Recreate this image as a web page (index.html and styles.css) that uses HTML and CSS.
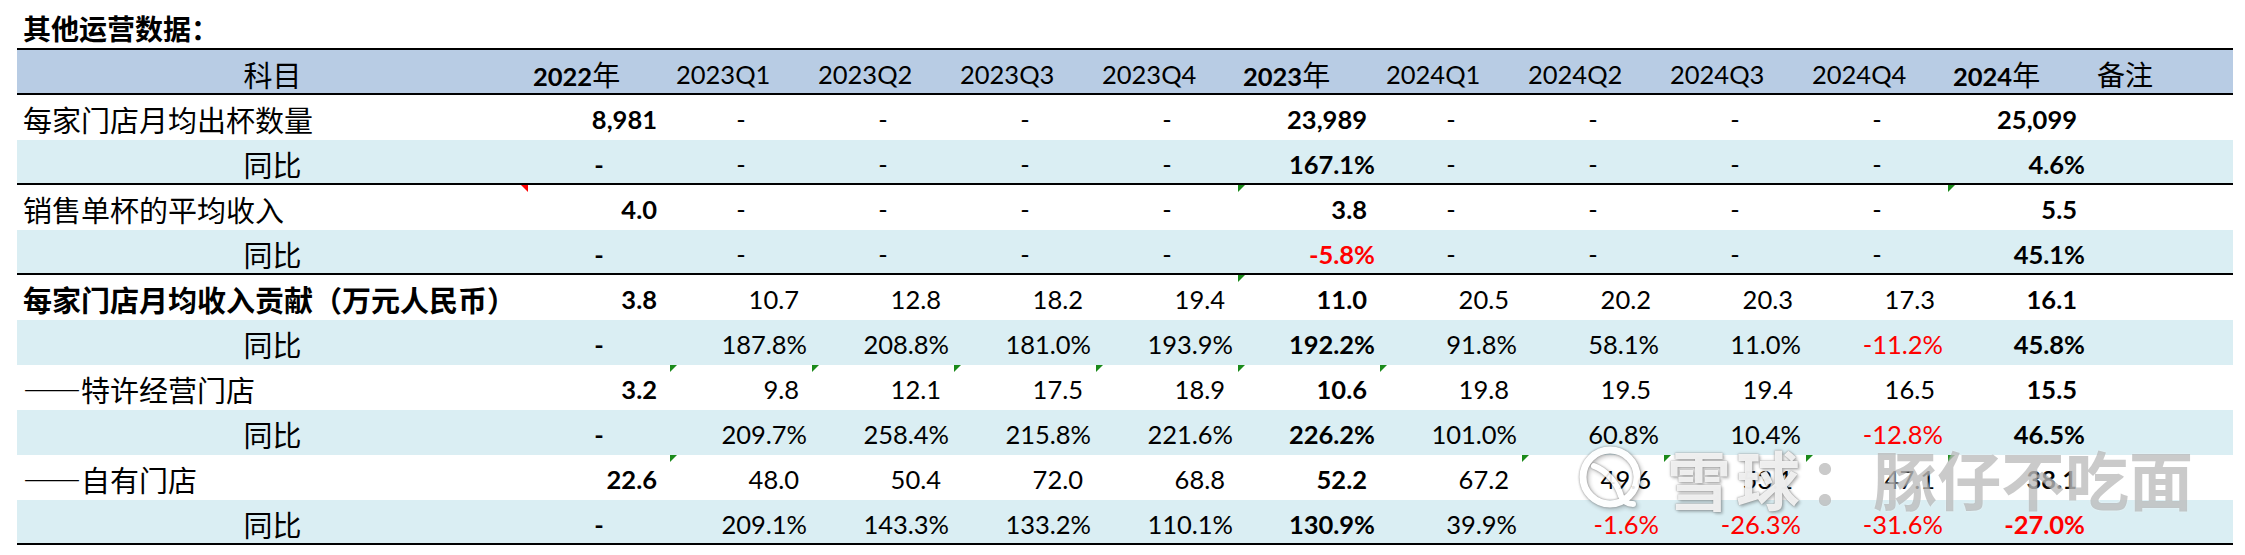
FILE: index.html
```html
<!DOCTYPE html>
<html lang="zh-CN">
<head>
<meta charset="utf-8">
<title>其他运营数据</title>
<link rel="stylesheet" href="styles.css">
</head>
<body>
<div class="title">其他运营数据：</div>
<div class="sheet">
  <div class="row hd">
    <div class="c lab ctr">科目</div>
    <div class="c hy"><span class="yb">2022</span>年</div>
    <div class="c h">2023Q1</div>
    <div class="c h">2023Q2</div>
    <div class="c h">2023Q3</div>
    <div class="c h">2023Q4</div>
    <div class="c hy"><span class="yb">2023</span>年</div>
    <div class="c h">2024Q1</div>
    <div class="c h">2024Q2</div>
    <div class="c h">2024Q3</div>
    <div class="c h">2024Q4</div>
    <div class="c hy"><span class="yb">2024</span>年</div>
    <div class="c hy rem">备注</div>
  </div>

  <div class="row">
    <div class="c lab">每家门店月均出杯数量</div>
    <div class="c n b">8,981</div>
    <div class="c d">-</div><div class="c d">-</div><div class="c d">-</div><div class="c d">-</div>
    <div class="c n b">23,989</div>
    <div class="c d">-</div><div class="c d">-</div><div class="c d">-</div><div class="c d">-</div>
    <div class="c n b">25,099</div>
    <div class="c"></div>
  </div>

  <div class="row yoy sep">
    <div class="c lab ctr">同比</div>
    <div class="c d b">-</div>
    <div class="c d">-</div><div class="c d">-</div><div class="c d">-</div><div class="c d">-</div>
    <div class="c p b">167.1%</div>
    <div class="c d">-</div><div class="c d">-</div><div class="c d">-</div><div class="c d">-</div>
    <div class="c p b">4.6%</div>
    <div class="c"></div>
  </div>

  <div class="row">
    <div class="c lab rc">销售单杯的平均收入</div>
    <div class="c n b">4.0</div>
    <div class="c d">-</div><div class="c d">-</div><div class="c d">-</div><div class="c d">-</div>
    <div class="c n b g">3.8</div>
    <div class="c d">-</div><div class="c d">-</div><div class="c d">-</div><div class="c d">-</div>
    <div class="c n b g">5.5</div>
    <div class="c"></div>
  </div>

  <div class="row yoy sep">
    <div class="c lab ctr">同比</div>
    <div class="c d b">-</div>
    <div class="c d">-</div><div class="c d">-</div><div class="c d">-</div><div class="c d">-</div>
    <div class="c p b r">-5.8%</div>
    <div class="c d">-</div><div class="c d">-</div><div class="c d">-</div><div class="c d">-</div>
    <div class="c p b">45.1%</div>
    <div class="c"></div>
  </div>

  <div class="row">
    <div class="c lab b">每家门店月均收入贡献（万元人民币）</div>
    <div class="c n b">3.8</div>
    <div class="c n">10.7</div><div class="c n">12.8</div><div class="c n">18.2</div><div class="c n">19.4</div>
    <div class="c n b g">11.0</div>
    <div class="c n">20.5</div><div class="c n">20.2</div><div class="c n">20.3</div><div class="c n">17.3</div>
    <div class="c n b">16.1</div>
    <div class="c"></div>
  </div>

  <div class="row yoy">
    <div class="c lab ctr">同比</div>
    <div class="c d b">-</div>
    <div class="c p">187.8%</div><div class="c p">208.8%</div><div class="c p">181.0%</div><div class="c p">193.9%</div>
    <div class="c p b">192.2%</div>
    <div class="c p">91.8%</div><div class="c p">58.1%</div><div class="c p">11.0%</div><div class="c p r">-11.2%</div>
    <div class="c p b">45.8%</div>
    <div class="c"></div>
  </div>

  <div class="row">
    <div class="c lab">——特许经营门店</div>
    <div class="c n b">3.2</div>
    <div class="c n g">9.8</div><div class="c n g">12.1</div><div class="c n g">17.5</div><div class="c n g">18.9</div>
    <div class="c n b g">10.6</div>
    <div class="c n g">19.8</div><div class="c n">19.5</div><div class="c n">19.4</div><div class="c n">16.5</div>
    <div class="c n b">15.5</div>
    <div class="c"></div>
  </div>

  <div class="row yoy">
    <div class="c lab ctr">同比</div>
    <div class="c d b">-</div>
    <div class="c p">209.7%</div><div class="c p">258.4%</div><div class="c p">215.8%</div><div class="c p">221.6%</div>
    <div class="c p b">226.2%</div>
    <div class="c p">101.0%</div><div class="c p">60.8%</div><div class="c p">10.4%</div><div class="c p r">-12.8%</div>
    <div class="c p b">46.5%</div>
    <div class="c"></div>
  </div>

  <div class="row">
    <div class="c lab">——自有门店</div>
    <div class="c n b">22.6</div>
    <div class="c n g">48.0</div><div class="c n">50.4</div><div class="c n">72.0</div><div class="c n">68.8</div>
    <div class="c n b">52.2</div>
    <div class="c n">67.2</div><div class="c n g">49.6</div><div class="c n g">53.1</div><div class="c n g">47.1</div>
    <div class="c n b g">38.1</div>
    <div class="c"></div>
  </div>

  <div class="row yoy sep">
    <div class="c lab ctr">同比</div>
    <div class="c d b">-</div>
    <div class="c p">209.1%</div><div class="c p">143.3%</div><div class="c p">133.2%</div><div class="c p">110.1%</div>
    <div class="c p b">130.9%</div>
    <div class="c p">39.9%</div><div class="c p r">-1.6%</div><div class="c p r">-26.3%</div><div class="c p r">-31.6%</div>
    <div class="c p b r">-27.0%</div>
    <div class="c"></div>
  </div>
</div>

<div class="wm">
  <svg class="wm-logo" width="66" height="66" viewBox="0 0 66 66">
    <circle cx="33" cy="33" r="27" fill="none" stroke="#fff" stroke-width="7"/>
    <path d="M17 22 C 28 26, 40 38, 44 52 C 46 57, 50 60, 56 60" fill="none" stroke="#fff" stroke-width="6" stroke-linecap="round"/>
  </svg>
  <span class="wm-a">雪球</span><span class="wm-b">：</span><span class="wm-c">豚仔不吃面</span>
</div>
</body>
</html>
```

FILE: styles.css
```css
html, body {
  margin: 0;
  padding: 0;
  background: #fff;
}

body {
  position: relative;
  width: 2245px;
  height: 555px;
  overflow: hidden;
  color: #000;
}

.title {
  box-sizing: border-box;
  height: 48px;
  padding: 7px 0 0 23px;
  font-family: "Noto Sans CJK SC", sans-serif;
  font-weight: 700;
  font-size: 28px;
  line-height: 42px;
}

.sheet {
  margin-left: 17px;
  width: 2216px;
  border-top: 2px solid #000;
}

.row {
  display: grid;
  grid-template-columns: 511px repeat(11, 142px) 143px;
  box-sizing: border-box;
  height: 45px;
}

.hd {
  background: #b8cce4;
  border-bottom: 2px solid #000;
}

.yoy {
  background: #daeef3;
}

.sep {
  border-bottom: 2px solid #000;
}

.c {
  position: relative;
  box-sizing: border-box;
  padding-top: 3px;
  font-family: Lato, "Noto Sans CJK SC", sans-serif;
  font-size: 25.5px;
  line-height: 42px;
  white-space: nowrap;
}

.lab {
  font-family: "Noto Sans CJK SC", sans-serif;
  font-size: 29px;
  padding-left: 6px;
}

.ctr {
  text-align: center;
  padding-left: 0;
}

.h {
  padding-left: 6px;
}

.hy {
  padding-left: 5px;
  font-family: "Noto Sans CJK SC", sans-serif;
  font-size: 28px;
}

.yb {
  font-family: Lato, sans-serif;
  font-weight: 700;
  font-size: 25.5px;
}

.rem {
  padding-left: 7px;
}

.n {
  text-align: right;
  padding-right: 13px;
}

.p {
  text-align: right;
  padding-right: 5px;
}

.d {
  text-align: center;
}

.b {
  font-weight: 700;
}

.r {
  color: #ff0000;
}

.g::before {
  content: "";
  position: absolute;
  left: 0;
  top: 0;
  width: 0;
  height: 0;
  border-top: 7px solid #1a8a1a;
  border-right: 7px solid transparent;
}

.rc::after {
  content: "";
  position: absolute;
  right: 0;
  top: 0;
  width: 0;
  height: 0;
  border-top: 7px solid #ff0000;
  border-left: 7px solid transparent;
}

/* watermark overlay */
.wm {
  position: absolute;
  left: 1577px;
  top: 444px;
  display: flex;
  align-items: center;
  font-family: "Noto Sans CJK SC", sans-serif;
  font-weight: 700;
  font-size: 64px;
  line-height: 66px;
  pointer-events: none;
}

.wm-logo {
  filter: drop-shadow(0 0 1px rgba(90, 90, 90, 0.7)) drop-shadow(2px 2px 2px rgba(0, 0, 0, 0.25));
  opacity: 0.9;
  margin-right: 24px;
}

.wm-a {
  color: rgba(255, 255, 255, 0.88);
  letter-spacing: 5px;
  text-shadow: 0 0 1px rgba(90, 90, 90, 0.7), 0 0 3px rgba(110, 110, 110, 0.45), 2px 2px 3px rgba(0, 0, 0, 0.22);
}

.wm-b,
.wm-c {
  color: rgba(150, 150, 150, 0.5);
  text-shadow: 0 0 2px rgba(255, 255, 255, 0.6);
}

.wm-b {
  margin-left: 4px;
}
```
